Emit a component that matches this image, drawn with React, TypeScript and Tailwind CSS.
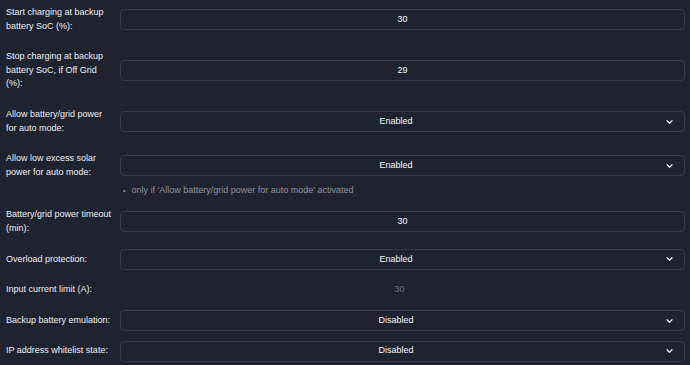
import React from "react";

const Chevron = () => (
  <svg width="7" height="5" viewBox="0 0 7 5" className="absolute right-[11px] top-1/2 -translate-y-1/2">
    <path d="M1 1.2 L3.5 3.7 L6 1.2" fill="none" stroke="#e6e8ec" strokeWidth="1.3" strokeLinecap="round" strokeLinejoin="round" />
  </svg>
);

type Row = {
  label: string[];
  kind: "input" | "select" | "plain";
  value: string;
};

const rows: Row[] = [
  { label: ["Start charging at backup", "battery SoC (%):"], kind: "input", value: "30" },
  { label: ["Stop charging at backup", "battery SoC, if Off Grid", "(%):"], kind: "input", value: "29" },
  { label: ["Allow battery/grid power", "for auto mode:"], kind: "select", value: "Enabled" },
  { label: ["Allow low excess solar", "power for auto mode:"], kind: "select", value: "Enabled" },
  { label: ["Battery/grid power timeout", "(min):"], kind: "input", value: "30" },
  { label: ["Overload protection:"], kind: "select", value: "Enabled" },
  { label: ["Input current limit (A):"], kind: "plain", value: "30" },
  { label: ["Backup battery emulation:"], kind: "select", value: "Disabled" },
  { label: ["IP address whitelist state:"], kind: "select", value: "Disabled" },
];

function Field({ r }: { r: Row }) {
  if (r.kind === "plain") {
    return (
      <div className="h-[21px] flex items-center justify-center pr-[6px] text-[#6f7580]">{r.value}</div>
    );
  }
  return (
    <div className="relative h-[21px] rounded-[4px] border border-[#353a45] bg-[#1f2330] flex items-center justify-center text-[#f4f5f7]">
      <span className={r.kind === "select" ? "pr-[13px]" : ""}>{r.value}</span>
      {r.kind === "select" && <Chevron />}
    </div>
  );
}

export default function App() {
  return (
    <div
      className="w-[690px] h-[365px] overflow-hidden bg-[#1f2330] text-[#eceef1] text-[9px] leading-[13.6px] pt-[2px]"
      style={{ fontFamily: "'Liberation Sans', Arial, sans-serif" }}
    >
      <div className="flex flex-col">
        {rows.map((r, i) => (
          <React.Fragment key={i}>
            <div className={`flex items-center ${i === 3 ? "" : "mb-[9px]"}`}>
              <div className="w-[114px] pl-[6px] py-[4px] shrink-0 whitespace-nowrap">
                {r.label.map((l, j) => (
                  <div key={j}>{l}</div>
                ))}
              </div>
              <div className="ml-[6px] w-[565px]">
                <Field r={r} />
              </div>
            </div>
            {i === 3 && (
              <div className="flex items-center pl-[123px] h-[14px] mb-[7px] text-[#8c919a] whitespace-nowrap">
                <span className="mr-[6px] text-[7px]">•</span>
                <span>only if 'Allow battery/grid power for auto mode' activated</span>
              </div>
            )}
          </React.Fragment>
        ))}
      </div>
    </div>
  );
}
